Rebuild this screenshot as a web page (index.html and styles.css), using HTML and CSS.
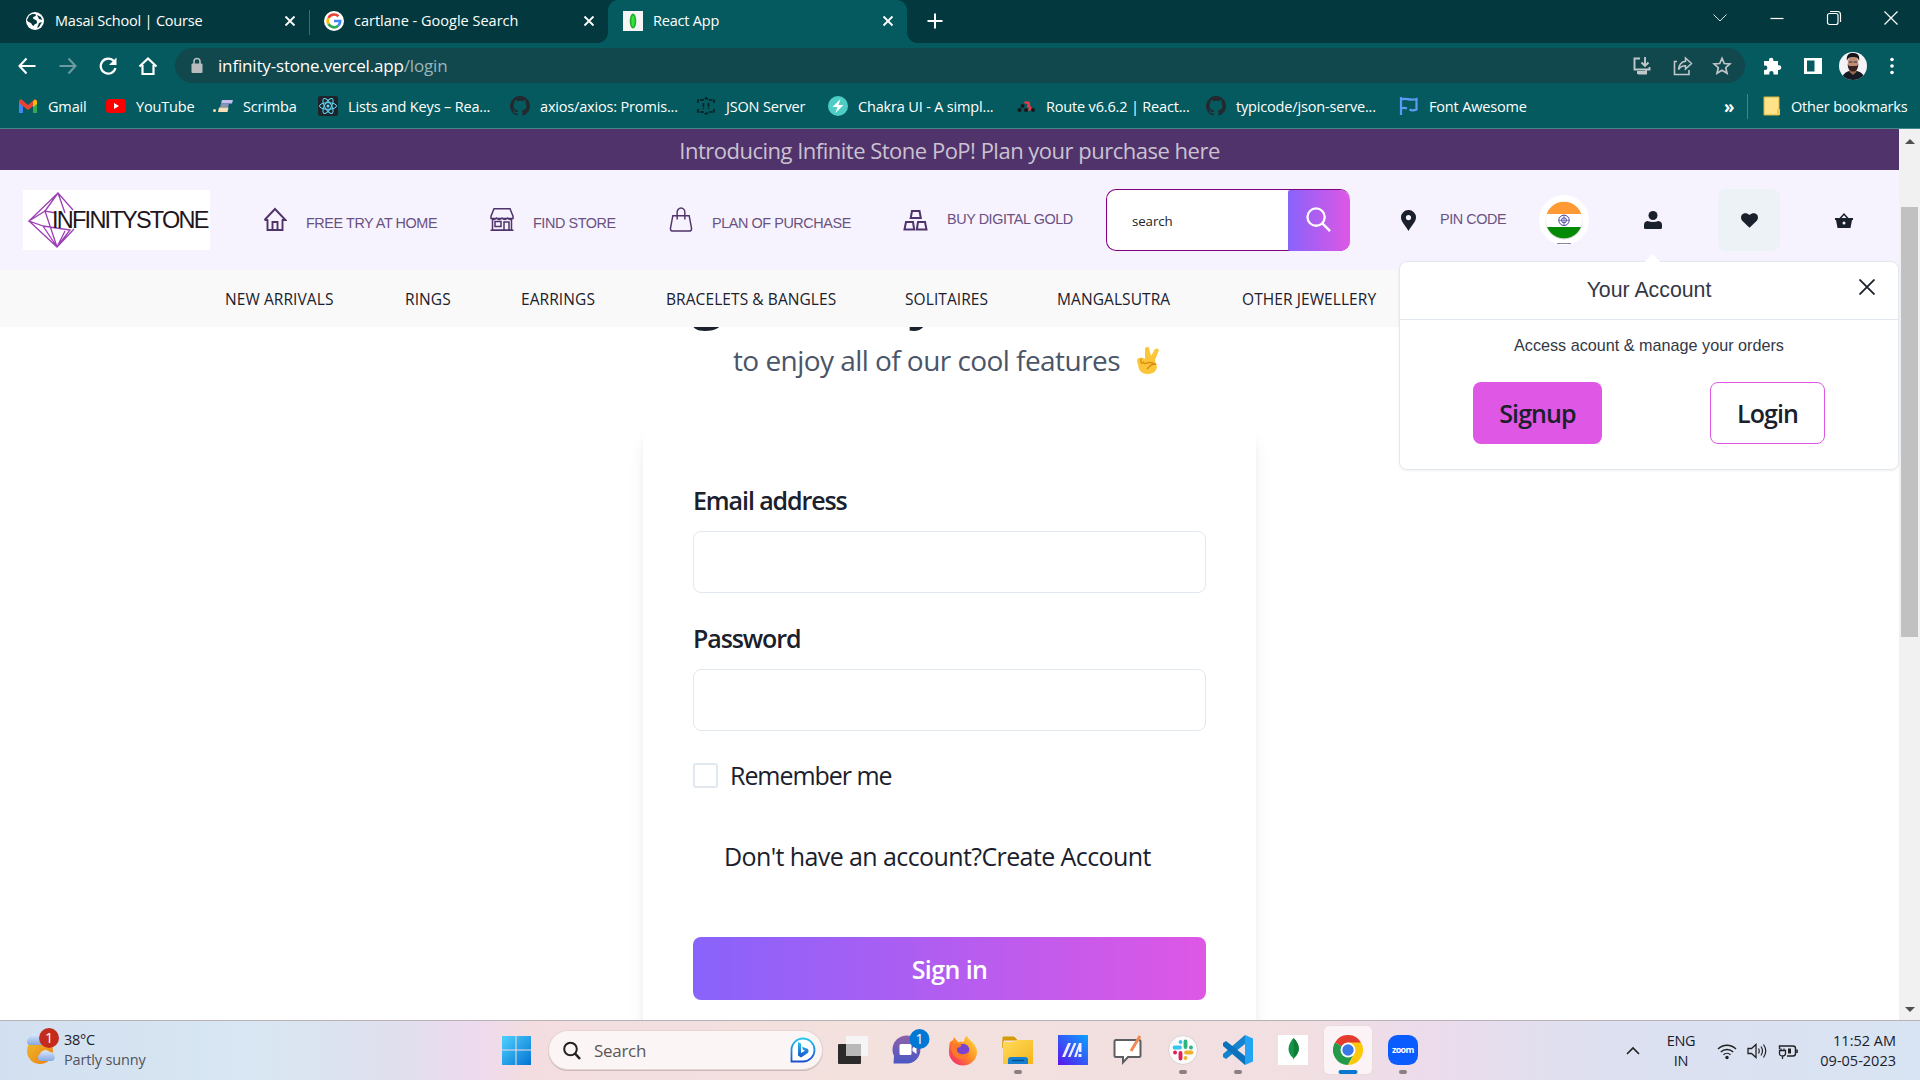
FILE: index.html
```html
<!DOCTYPE html>
<html lang="en">
<head>
<meta charset="utf-8">
<title>React App</title>
<link rel="stylesheet" href="styles.css">
</head>
<body>
<div class="desktop">
  <header class="browser">
    <div class="tabstrip">
      <div class="tab">
        <svg class="i20" viewBox="0 0 20 20"><circle cx="10" cy="10" r="9" fill="#fff"/><path d="M4 5c3-3 7-2 7-1 0 2-3 1-3 3s4 1 4 4-3 1-3 4l-2-1c0-3-4-2-5-5zM12 4l4 2 1 3-3-1zM14 12l3-1-3 5-2 1z" fill="#03393e"/></svg>
        <span class="tab-title">Masai School | Course</span>
        <svg class="i12" viewBox="0 0 12 12"><path d="M1.5 1.5l9 9m0-9l-9 9" stroke="#fff" stroke-width="1.8"/></svg>
      </div>
      <div class="tab tab-sep">
        <svg class="i20" viewBox="0 0 20 20"><circle cx="10" cy="10" r="10" fill="#fff"/><g fill="none" stroke-width="2.7"><path d="M14.5 5.3A6.3 6.3 0 0 0 4.5 7" stroke="#ea4335"/><path d="M4.5 7a6.3 6.3 0 0 0 0 6" stroke="#fbbc05"/><path d="M4.5 13a6.3 6.3 0 0 0 9.700 1.700" stroke="#34a853"/><path d="M14.200 14.700A6 6 0 0 0 16.200 10H10" stroke="#4285f4"/></g></svg>
        <span class="tab-title">cartlane - Google Search</span>
        <svg class="i12" viewBox="0 0 12 12"><path d="M1.500 1.500l9 9m0-9l-9 9" stroke="#fff" stroke-width="1.800"/></svg>
      </div>
      <div class="tab tab-active">
        <svg class="i20" viewBox="0 0 20 20"><path d="M0 0h20v20H0z" fill="#f5f5f5"/><ellipse cx="10" cy="10" rx="3.300" ry="7.500" fill="#1eaf2c"/><ellipse cx="10" cy="10" rx="1.600" ry="5.500" fill="#37e03a"/></svg>
        <span class="tab-title">React App</span>
        <svg class="i12" viewBox="0 0 12 12"><path d="M1.500 1.500l9 9m0-9l-9 9" stroke="#fff" stroke-width="1.800"/></svg>
      </div>
      <svg class="newtab" viewBox="0 0 16 16"><path d="M8 0.500v15M0.500 8h15" stroke="#fff" stroke-width="2"/></svg>
      <div class="winctl">
        <svg viewBox="0 0 16 16"><path d="M1.500 4.500L8 11l6.500-6.500" fill="none" stroke="#dbe4e4"/></svg>
        <svg viewBox="0 0 16 16"><path d="M1.500 8.500h13" stroke="#fff" stroke-width="1.200"/></svg>
        <svg viewBox="0 0 16 16"><rect x="1.500" y="3.500" width="10.500" height="11" rx="2" fill="none" stroke="#fff" stroke-width="1.200"/><path d="M4 1.500h7.500a3 3 0 0 1 3 3V12" fill="none" stroke="#fff" stroke-width="1.200"/></svg>
        <svg viewBox="0 0 16 16"><path d="M1.500 1.500l13 13m0-13l-13 13" stroke="#fff" stroke-width="1.200"/></svg>
      </div>
    </div>
    <div class="toolbar">
      <svg class="i20" viewBox="0 0 20 20"><path d="M18.500 10H3M9.500 2.500L2.500 10l7 7.500" fill="none" stroke="#fff" stroke-width="2.100"/></svg>
      <svg class="i20" viewBox="0 0 20 20"><path d="M1.500 10H17M10.500 2.500l7 7.500-7 7.500" fill="none" stroke="#6c9a9e" stroke-width="2.100"/></svg>
      <svg class="i20" viewBox="0 0 20 20"><path d="M16 5.300A7.500 7.500 0 1 0 17.500 12" fill="none" stroke="#fff" stroke-width="2.200"/><path d="M18.500 1.500V9H11z" fill="#fff"/></svg>
      <svg class="i20" viewBox="0 0 20 20"><path d="M1.500 10.500L10 2.500l8.500 8M4.500 9v9h11V9" fill="none" stroke="#fff" stroke-width="2.200"/></svg>
      <div class="omnibox">
        <svg class="lock" viewBox="0 0 12 16"><rect x="0.500" y="6" width="11" height="9.500" rx="1" fill="#b9bcbe"/><path d="M3 7V4a3 3 0 0 1 6 0v3" fill="none" stroke="#b9bcbe" stroke-width="1.600"/></svg>
        <span class="url">infinity-stone.vercel.app<i>/login</i></span>
        <svg class="i20" viewBox="0 0 20 20"><path d="M8 2.500H2.500v11h15V11M6 17.500h8v-3" fill="none" stroke="#c0c7c9" stroke-width="1.900"/><path d="M5 15h10v3H5z" fill="#c0c7c9"/><path d="M13 1v9M9.500 6.500L13 10l3.500-3.500" fill="none" stroke="#c0c7c9" stroke-width="1.900"/></svg>
        <svg class="i20" viewBox="0 0 20 20"><path d="M4 5.500H1.500v13H16V14" fill="none" stroke="#c0c7c9" stroke-width="1.600"/><path d="M12.500 2l6 5.500-6 5.500V9.800C9 9.800 7 11 5.500 13.500c.5-4.500 3-7.700 7-8.200z" fill="none" stroke="#c0c7c9" stroke-width="1.500"/></svg>
        <svg class="i20" viewBox="0 0 20 20"><path d="M10 2.300l2.300 5.200 5.600.5-4.200 3.700 1.300 5.600-5-3-5 3 1.300-5.600L2.100 8l5.600-.5z" fill="none" stroke="#c0c7c9" stroke-width="1.700"/></svg>
      </div>
      <svg class="i20" viewBox="0 0 20 20"><path d="M2 5h5V4a2.200 2.200 0 0 1 4.400 0v1H16v4.300h1a2.300 2.300 0 0 1 0 4.600h-1V18.500h-4.500V17a2.100 2.100 0 0 0-4.200 0v1.500H2V14h1.200a2.200 2.200 0 0 0 0-4.400H2z" fill="#fff"/></svg>
      <svg class="i20" viewBox="0 0 20 20"><path d="M1 2h18v16H1zM4 4.500v11h7.500v-11z" fill="#fff" fill-rule="evenodd"/></svg>
      <svg class="avatar" viewBox="0 0 28 28"><defs><clipPath id="av"><circle cx="14" cy="14" r="14"/></clipPath></defs><g clip-path="url(#av)"><path d="M0 0h28v28H0z" fill="#f4f4f6"/><path d="M3 28c0-6 4-8 7-9h8c4 1 7 3 8 9z" fill="#161a22"/><path d="M10.500 15h7v5L14 23l-3.500-3z" fill="#9a6652"/><ellipse cx="14" cy="11" rx="5.300" ry="7" fill="#c08d76"/><path d="M8.700 12c0 5 2 7.500 5.300 7.500s5.300-2.500 5.300-7.500c-1 2.500-2 2-5.300 2s-4.300.5-5.300-2z" fill="#33221f"/><path d="M8 9c-1-6 2-8.500 7-8 4 .2 6 3 5 8-1-3-2-4-6-4s-5 1-6 4z" fill="#15151a"/><path d="M10 10h3.500m1 0H18" stroke="#333"/></g></svg>
      <svg class="i20" viewBox="0 0 20 20"><g fill="#fff"><circle cx="10" cy="3.500" r="1.800"/><circle cx="10" cy="10" r="1.800"/><circle cx="10" cy="16.500" r="1.800"/></g></svg>
    </div>
    <nav class="bookmarks">
      <a><svg viewBox="0 0 20 20"><path d="M1 4v13h4V9z" fill="#4285f4"/><path d="M19 4v13h-4V9z" fill="#34a853"/><path d="M1 5l2-2 7 6 7-6 2 2v2l-9 7-9-7z" fill="#ea4335"/><path d="M15 5.300L17 3.500l2 1.500v3l-4 3z" fill="#fbbc04"/></svg>Gmail</a>
      <a><svg viewBox="0 0 20 20"><rect y="3" width="20" height="14" rx="3.500" fill="#f00"/><path d="M8 7l5 3-5 3z" fill="#fff"/></svg>YouTube</a>
      <a><svg viewBox="0 0 20 20"><path d="M9 4h11l-1 3.500H8z" fill="#c6bcf2"/><path d="M8 7.500h8l-1 4H7z" fill="#8b93b5"/><path d="M6 11.500h9.500l-1 4.500H5z" fill="#f6dfb8"/><circle cx="1.500" cy="14.500" r="1.500" fill="#f6dfb8"/></svg>Scrimba</a>
      <a><svg viewBox="0 0 20 20"><rect width="20" height="20" rx="2" fill="#20232a"/><g fill="none" stroke="#61dafb"><ellipse cx="10" cy="10" rx="8.500" ry="3.300"/><ellipse cx="10" cy="10" rx="8.500" ry="3.300" transform="rotate(60 10 10)"/><ellipse cx="10" cy="10" rx="8.500" ry="3.300" transform="rotate(120 10 10)"/></g><circle cx="10" cy="10" r="1.500" fill="#61dafb"/></svg>Lists and Keys – Rea...</a>
      <a><svg viewBox="0 0 16 16"><path d="M8 0a8 8 0 0 0-2.530 15.590c.4.070.550-.170.550-.380l-.010-1.490c-2.010.370-2.530-.490-2.690-.940-.090-.230-.480-.940-.820-1.130-.280-.150-.680-.520-.010-.530.630-.010 1.080.580 1.230.820.720 1.210 1.870.870 2.330.660.070-.520.280-.870.510-1.070-1.780-.200-3.640-.890-3.640-3.950 0-.870.310-1.590.820-2.150-.080-.200-.360-1.020.080-2.120 0 0 .670-.210 2.200.820a7.400 7.400 0 0 1 4 0c1.530-1.040 2.200-.820 2.200-.820.440 1.100.160 1.920.080 2.120.510.560.820 1.270.820 2.150 0 3.070-1.870 3.750-3.650 3.950.290.250.540.730.540 1.480l-.010 2.200c0 .210.150.460.550.380A8 8 0 0 0 8 0z" fill="#24292f"/></svg>axios/axios: Promis...</a>
      <a><svg viewBox="0 0 20 20"><path d="M2 7V4h5l3-2 3 2h5v3M2 13v3h5l3 2 3-2h5v-3M7.500 7v6M12.500 7v6" fill="none" stroke="#071f22" stroke-width="1.600" stroke-dasharray="4 1"/></svg>JSON Server</a>
      <a><svg viewBox="0 0 20 20"><circle cx="10" cy="10" r="10" fill="#4ecdc4"/><path d="M12.500 3L4.500 11h5l-2 6 8-8h-5z" fill="#fff"/></svg>Chakra UI - A simpl...</a>
      <a><svg viewBox="0 0 20 20"><g fill="#171717"><circle cx="3.500" cy="14" r="2"/><circle cx="6.500" cy="10" r="2"/><circle cx="10" cy="14" r="2"/><circle cx="17" cy="14" r="2"/></g><path d="M9.500 6.500h1.500a1.800 1.800 0 0 1 0 3.600h1a2 2 0 0 1 1.500 3.500" fill="none" stroke="#e63946" stroke-width="2.600" stroke-linecap="round"/></svg>Route v6.6.2 | React...</a>
      <a><svg viewBox="0 0 16 16"><path d="M8 0a8 8 0 0 0-2.530 15.590c.4.070.550-.170.550-.380l-.010-1.490c-2.010.370-2.530-.490-2.690-.940-.090-.230-.480-.940-.820-1.130-.280-.150-.680-.520-.010-.530.630-.010 1.080.580 1.230.820.720 1.210 1.870.870 2.330.660.070-.520.280-.870.510-1.070-1.780-.200-3.640-.890-3.640-3.950 0-.870.310-1.590.820-2.150-.080-.200-.360-1.020.080-2.120 0 0 .670-.210 2.200.820a7.400 7.400 0 0 1 4 0c1.530-1.040 2.200-.820 2.200-.820.440 1.100.160 1.920.080 2.120.510.560.820 1.270.820 2.150 0 3.070-1.870 3.750-3.650 3.950.290.250.540.730.540 1.480l-.010 2.200c0 .210.150.460.550.380A8 8 0 0 0 8 0z" fill="#24292f"/></svg>typicode/json-serve...</a>
      <a><svg viewBox="0 0 20 20"><path d="M2 1v18M2 3.500c5-2.500 8 2 15.500-.500v10.500c-2.500 1-5 1-7 0M2 12.500c2-.800 4-.800 6 0" fill="none" stroke="#5b9bf5" stroke-width="2.200"/></svg>Font Awesome</a>
      <b>»</b>
      <a class="other"><svg viewBox="0 0 20 20"><path d="M2 1h15v18H2z" fill="#ffe28a" stroke="#d8b43c"/><path d="M15 13h3v6h-3z" fill="#f0c84b"/></svg>Other bookmarks</a>
    </nav>
  </header>

  <div class="viewport">
    <main class="site">
      <div class="promo">Introducing Infinite Stone PoP! Plan your purchase here</div>
      <div class="header">
        <div class="logo">
          <svg viewBox="0 0 187 60"><g fill="none" stroke="#9b3fb5" stroke-width="1.300"><path d="M50 20L35 3 6 31l28 26 17-18M35 3L22 21 6 31l14 5 14 21-12-36 11 2M35 3l7 20M20 36l27 4-13 17 8-16M35 3L22 21"/></g></svg>
          <span>INFINITYSTONE</span>
        </div>
        <a class="hl"><svg viewBox="0 0 24 24"><path d="M4.500 12v10.500h15V12M9.500 22.500v-8h5v8M1.500 12.500L12 1.500l10.500 11H19M1.500 12.500H5" fill="none" stroke="#50336a" stroke-width="1.900"/></svg><span>FREE TRY AT HOME</span></a>
        <a class="hl"><svg viewBox="0 0 24 24"><path d="M4 1.200h16l3 7.500v2.300H1V8.700zM2.500 11v11.500h19V11M0.500 22.700h23M1 10.500q2.700 3 5.500 0 2.700 3 5.500 0 2.700 3 5.500 0 2.700 3 5.500 0M5 14h6v5H5zM14 22v-7.500h5V22" fill="none" stroke="#50336a" stroke-width="1.500"/></svg><span>FIND STORE</span></a>
        <a class="hl hl-plan"><svg viewBox="0 0 24 26"><path d="M3.500 9h17l2.500 13.500q0 2.500-2.500 2.500h-17Q1 25 1 22.500zM8 13V5.500a4 4.500 0 0 1 8 0V13" fill="none" stroke="#50336a" stroke-width="1.500"/></svg><span>PLAN OF PURCHASE</span></a>
        <a class="hl hl-gold"><svg viewBox="0 0 25 22"><path d="M9 2h7.500l1.300 7H7.700zM3 13h7l1.200 7.500H1.500zM15 13h7l1.500 7.500h-9.700z" fill="none" stroke="#50336a" stroke-width="2"/></svg><span>BUY DIGITAL GOLD</span></a>
        <div class="search"><span>search</span><div class="search-btn"><svg viewBox="0 0 26 26"><circle cx="10.500" cy="10.500" r="9" fill="none" stroke="#fff" stroke-width="2.400"/><path d="M17 17l8 8" stroke="#fff" stroke-width="2.600"/></svg></div></div>
        <svg class="pin" viewBox="0 0 15 21"><path d="M7.500 0A7.400 7.400 0 0 0 0 7.500C0 12 5 16 7.500 21 10 16 15 12 15 7.500A7.400 7.400 0 0 0 7.500 0zm0 5a2.600 2.600 0 1 1 0 5.200 2.600 2.600 0 0 1 0-5.200z" fill="#1a202c"/></svg>
        <span class="pincode">PIN CODE</span>
        <svg class="flag" viewBox="0 0 50 50"><defs><clipPath id="fl"><circle cx="25" cy="25" r="18.300"/></clipPath></defs><circle cx="25" cy="25" r="25" fill="#fff"/><circle cx="25" cy="26" r="18.500" fill="#d3d3d3"/><g clip-path="url(#fl)"><path d="M0 0h50v19H0z" fill="#ff9933"/><path d="M0 19h50v13H0z" fill="#fff"/><path d="M0 32h50v18H0z" fill="#048a04"/></g><g fill="none" stroke="#4747a3"><circle cx="25" cy="25.300" r="5.200"/><circle cx="25" cy="25.300" r="2.500"/><path d="M19.500 25.300h11M25 20v10.500" stroke-width=".7"/></g><path d="M18 48.500h14" stroke="#6c6699" stroke-width=".8"/></svg>
        <svg class="user" viewBox="0 0 18 18"><circle cx="9" cy="4.500" r="4.500" fill="#1a202c"/><path d="M0 17.500v-3.500q0-3.500 3.500-4 5.500 2 11 0 3.500.5 3.500 4v2.500q0 1.500-1.500 1.500h-15z" fill="#1a202c"/></svg>
        <div class="wish"><svg viewBox="0 0 17 15"><path d="M8.500 14.800L1.500 8C-.5 6-.3 3 1.200 1.500 3-.3 6-.5 8.500 2 11-.5 14-.3 15.800 1.500 17.300 3 17.500 6 15.500 8z" fill="#1a202c"/></svg></div>
        <svg class="basket" viewBox="0 0 18 15"><path d="M0 5h4.500L9 0l4.500 5H18v2h-1l-1.500 8h-13L1 7H0zm6.500 0h5L9 2.300zM9 8.500A1.500 1.500 0 1 0 9 11.500 1.500 1.500 0 0 0 9 8.500z" fill="#1a202c" fill-rule="evenodd"/></svg>
      </div>
      <div class="menu"><a>NEW ARRIVALS</a><a>RINGS</a><a>EARRINGS</a><a>BRACELETS &amp; BANGLES</a><a>SOLITAIRES</a><a>MANGALSUTRA</a><a>OTHER JEWELLERY</a></div>
      <div class="content">
        <h1>Sign in to your account</h1>
        <p class="sub"><span>to enjoy all of our cool features</span>
          <svg viewBox="0 0 22 28"><path d="M8 13V2.500Q10-.5 12 2l2 8 4-7q2.500-1.500 4 1l-4 10 2 7q-1 7-9 7-7 0-9-5L0 15q0-3 2.500-3Q6 11 8 13z" fill="#fcc638"/><path d="M7 18q6-3 11 0-4 0-8 5M4 12.500v4q2 2 3-1" fill="none" stroke="#d98a12" stroke-width="1.300"/></svg>
        </p>
        <form class="card">
          <label>Email address</label>
          <div class="field"></div>
          <label>Password</label>
          <div class="field"></div>
          <div class="remember"><i></i><span>Remember me</span></div>
          <p class="create">Don't have an account?Create Account</p>
          <div class="signin">Sign in</div>
        </form>
      </div>
      <div class="popover">
        <div class="pop-head"><span>Your Account</span><svg viewBox="0 0 16 16"><path d="M.5 .5l15 15m0-15l-15 15" stroke="#1a202c" stroke-width="1.800"/></svg></div>
        <p>Access acount &amp; manage your orders</p>
        <div class="pop-actions"><div class="btn-signup">Signup</div><div class="btn-login">Login</div></div>
      </div>
    </main>
    <div class="scrollbar"><svg viewBox="0 0 10 6"><path d="M0 6l5-5 5 5z" fill="#505050"/></svg><div class="thumb"></div><svg viewBox="0 0 10 6"><path d="M0 0l5 5 5-5z" fill="#505050"/></svg></div>
  </div>

  <footer class="taskbar">
    <div class="weather">
      <svg viewBox="0 0 32 34"><defs><linearGradient id="sun" x2="1" y2="1"><stop stop-color="#ecc02f"/><stop offset="1" stop-color="#f07a10"/></linearGradient><linearGradient id="cl" x2="0" y2="1"><stop stop-color="#dce9fb"/><stop offset="1" stop-color="#86a8e2"/></linearGradient></defs><circle cx="15" cy="20" r="13" fill="url(#sun)"/><path d="M4 14a4 4 0 0 1 0-7 5 5 0 0 1 9-2 5 5 0 0 1 3 9z" fill="url(#cl)"/><path d="M15 30a4 4 0 0 1 0-7 6 6 0 0 1 10-2 4.700 4.700 0 0 1 2 9z" fill="url(#cl)"/></svg>
      <b>1</b>
      <div><span>38°C</span><em>Partly sunny</em></div>
    </div>
    <div class="apps">
      <svg viewBox="0 0 30 30"><defs><linearGradient id="win" x2="1" y2="1"><stop stop-color="#4fd2fd"/><stop offset="1" stop-color="#0273d4"/></linearGradient></defs><path d="M1 1h13.500v13.500H1zM15.500 1H30v13.500H15.500zM1 15.500h13.500V30H1zM15.500 15.500H30V30H15.500z" fill="url(#win)"/></svg>
      <div class="tsearch"><svg viewBox="0 0 18 18"><circle cx="7.500" cy="7.500" r="6.300" fill="none" stroke="#222" stroke-width="2"/><path d="M12 12l5 5.500" stroke="#222" stroke-width="2.600"/></svg><span>Search</span><svg class="bing" viewBox="0 0 26 26"><defs><linearGradient id="bg" x2="0" y2="1"><stop stop-color="#28c4f0"/><stop offset="1" stop-color="#1a4fd0"/></linearGradient></defs><path d="M1.500 24.500V13A11.500 11.500 0 1 1 13 24.500z" fill="#fff" stroke="url(#bg)" stroke-width="1.800"/><path d="M8 5l3 1.500V16l4-2.200-2-1-1-3 6 2.200q1.500 3-1 4.500L11 20.500 8 18.500z" fill="url(#bg)"/></svg></div>
      <svg viewBox="0 0 30 30"><rect y="9" width="23" height="20" rx="1" fill="#2b2b2b"/><rect x="8" y="1" width="22" height="20" rx="1" fill="#f5f5f5" opacity=".95"/><path d="M8 9h15v12H8z" fill="#b9b9b9"/></svg>
      <svg viewBox="0 0 30 30"><defs><linearGradient id="chat" x2="0" y2="1"><stop stop-color="#8d62a8"/><stop offset="1" stop-color="#4b57c6"/></linearGradient></defs><path d="M.5 28.500L1 21A14 14 0 1 1 15 28.500z" fill="url(#chat)"/><rect x="6.500" y="9" width="12" height="11" rx="1.500" fill="#fff"/><path d="M19.500 13l4-3v9l-4-3z" fill="#fff"/><circle cx="26.500" cy="4" r="10" fill="#0078d4"/><text x="22.500" y="9" fill="#fff" font-size="14">1</text></svg>
      <svg viewBox="0 0 30 30"><defs><linearGradient id="ff" x1="1" x2="0" y2="1"><stop stop-color="#ffe83b"/><stop offset=".5" stop-color="#ff8a25"/><stop offset="1" stop-color="#f3117e"/></linearGradient></defs><path d="M2 7l3-2 1-3 4 5q3-1 6 0c0-3 2-6 3-6 1 3 4 4 5 6 3 3 5 6 5 10a14 13.500 0 0 1-28 0Q1 10 2 7z" fill="url(#ff)"/><circle cx="15" cy="15" r="6.300" fill="#7942d0"/><path d="M3 10q5-3 11 0-2 3-5 3-1 5 4 6 5 1 8-3-1 8-9 8-9-2-9-14z" fill="#fb7a2a"/></svg>
      <svg class="run" viewBox="0 0 30 40"><defs><linearGradient id="fo" x2="1" y2="1"><stop stop-color="#ffdb5c"/><stop offset="1" stop-color="#f5b51b"/></linearGradient></defs><path d="M0 2h11l3 3H0v8z" fill="#d59a05" stroke="#d59a05"/><path d="M0 7h10l3-2h17v24H0z" fill="url(#fo)"/><path d="M5 29v-4q0-3 3-3h14q3 0 3 3v4z" fill="#1580cf"/><path d="M9 25.500h12" stroke="#08508f" stroke-width="1.500"/><rect x="11" y="35" width="8" height="4" rx="2" fill="#8a8082"/></svg>
      <svg viewBox="0 0 30 30"><defs><linearGradient id="my" x1="1" x2="0" y2="1"><stop stop-color="#0aa2ff"/><stop offset="1" stop-color="#5a14ef"/></linearGradient></defs><path d="M0 0h30v30H0z" fill="url(#my)"/><path d="M4 22L10 8h3L7 22zM10 22l6-14h2.500l-6 14zM16 22l5-14h2.500v9h-2.500v-3l-2.500 8zM20.500 19h3v3h-3z" fill="#f1eeff"/></svg>
      <svg viewBox="0 0 30 30"><path d="M3 5h23q1.500 0 1.500 1.500v14Q27.500 22 26 22H15l-5 5.500V22H3q-1.500 0-1.500-1.500v-14Q1.500 5 3 5z" fill="#fff" stroke="#5c5e62" stroke-width="2"/><path d="M27 1l-9 15" stroke="#ef8a55" stroke-width="3"/></svg>
      <svg class="run" viewBox="0 0 30 40"><circle cx="15" cy="15" r="14.500" fill="#fbfbfb" stroke="#d8d2d2"/><g stroke-width="3.800" stroke-linecap="round"><path d="M6.500 12.500H12M12.500 7v.1" stroke="#36c5f0"/><path d="M17.500 6.500V12M23 12.500h-.1" stroke="#2eb67d"/><path d="M18 17.500h5.500M17.500 23v-.1" stroke="#ecb22e"/><path d="M12.500 18v5.500M7 17.500h.1" stroke="#e01e5a"/></g><rect x="11" y="35" width="8" height="4" rx="2" fill="#8a8082"/></svg>
      <svg class="run" viewBox="0 0 30 40"><path d="M22 0v30L30 26.500v-23z" fill="#22a3f3"/><path d="M22 0L0 19v3l3 2L22 9z" fill="#1583cd"/><path d="M22 30L0 11V8l3-2 19 15z" fill="#0b72bd"/><rect x="11" y="35" width="8" height="4" rx="2" fill="#8a8082"/></svg>
      <svg viewBox="0 0 30 30"><path d="M0 0h30v30H0z" fill="#fff"/><path d="M15.500 3c7 7 7 14 .5 20l-.5 2-.5-2c-6.500-6-5.500-13 .5-20z" fill="#159447"/><path d="M15.500 3c7 7 7 14 .5 20z" fill="#0f7d38"/></svg>
      <div class="tile"><svg class="run" viewBox="0 0 30 40"><path d="M15 15L2 7.500a15 15 0 0 1 26 0z" fill="#e33b2e"/><path d="M15 15L2 7.500A15 15 0 0 0 15 30l6-11z" fill="#249a48"/><path d="M15 15l6 4-6 11A15 15 0 0 0 28 7.500H15z" fill="#fdc70c"/><circle cx="15" cy="15" r="7.500" fill="#fff"/><circle cx="15" cy="15" r="5.700" fill="#3b78e7"/><rect x="5.500" y="35" width="19" height="4" rx="2" fill="#0a78d0"/></svg></div>
      <svg class="run" viewBox="0 0 30 40"><rect width="30" height="30" rx="9.500" fill="#0b5cff"/><text x="4" y="17.500" fill="#fff" font-size="9" font-weight="bold" textLength="22">zoom</text><rect x="11" y="35" width="8" height="4" rx="2" fill="#8a8082"/></svg>
    </div>
    <div class="tray">
      <svg viewBox="0 0 20 20"><path d="M4 13l6-6 6 6" fill="none" stroke="#222" stroke-width="1.600"/></svg>
      <div class="lang">ENG<br>IN</div>
      <svg viewBox="0 0 20 20"><g fill="none" stroke="#222" stroke-width="1.400"><path d="M1 8a12.700 12.700 0 0 1 18 0M3.800 11a8.800 8.800 0 0 1 12.400 0M6.500 13.800a5 5 0 0 1 7 0"/></g><circle cx="10" cy="16.500" r="1.700" fill="#222"/></svg>
      <svg viewBox="0 0 20 20"><path d="M1 7.500h3.500L9 3.500v13l-4.500-4H1z" fill="none" stroke="#222" stroke-width="1.300"/><path d="M11.500 7.500q1.500 2.500 0 5M14 5.500q3 4.500 0 9M16.500 3.500q4.500 6.500 0 13" fill="none" stroke="#222" stroke-width="1.200"/></svg>
      <svg viewBox="0 0 20 20"><path d="M3.500 5H15q2.500 0 2.500 2.500v5q0 2.500-2.500 2.500H9M1.500 8V5h2" fill="none" stroke="#222" stroke-width="1.400"/><path d="M19 8.500v3.500" stroke="#222" stroke-width="1.600"/><path d="M10 7.500h3v5h-3z" fill="#222"/><path d="M1.500 9.500h6v3q0 2.500-3 2.500t-3-2.500zM4.500 15v3M3 9.500v-2m3 2v-2" fill="none" stroke="#222" stroke-width="1.300"/></svg>
      <div class="clock">11:52 AM<br>09-05-2023</div>
    </div>
  </footer>
</div>
</body>
</html>
```
FILE: styles.css
```css
* { box-sizing: border-box; }
body, h1, p { margin: 0; }
body { width: 1920px; height: 1080px; overflow: hidden; font-family: "Open Sans", "Noto Sans", sans-serif; color: #1a202c; }
svg { display: block; flex: none; }
i, em { font-style: normal; }
span, a, b { white-space: nowrap; }
.i20 { width: 20px; height: 20px; }
.i12 { width: 12px; height: 12px; }

.desktop { display: flex; flex-direction: column; height: 1080px; }

/* Browser window frame */
.browser { height: 129px; background: #055a60; border-bottom: 1px solid #45868a; color: #fff; }
.tabstrip { display: flex; height: 43px; background: #03393e; }
.tab { display: flex; align-items: center; width: 299px; height: 43px; padding: 0 13px 2px 15px; gap: 10px; font-size: 14.5px; }
.tab:first-child { width: 309px; padding-left: 25px; }
.tab-sep { background: linear-gradient(#46686b, #46686b) 0 10px / 1px 25px no-repeat; }
.tab-title { flex: 1; letter-spacing: -0.2px; }
.tab-sep .tab-title { letter-spacing: 0; }
.tab-active { position: relative; background: #055a60; border-radius: 10px 10px 0 0; }
.tab-active::before, .tab-active::after { content: ""; position: absolute; bottom: 0; width: 10px; height: 10px; }
.tab-active::before { left: -10px; background: radial-gradient(circle at 0 0, transparent 9.5px, #055a60 10px); }
.tab-active::after { right: -10px; background: radial-gradient(circle at 100% 0, transparent 9.5px, #055a60 10px); }
.newtab { width: 16px; height: 16px; margin: 13px 0 0 20px; }
.winctl { display: flex; gap: 41px; margin: 10px 21px 0 auto; }
.winctl svg { width: 16px; height: 16px; }
.toolbar { display: grid; grid-template-columns: 41px 40px 39.5px 37.5px 1587px 41px 36px 43px 20px; align-items: center; height: 45px; padding-left: 17px; }
.omnibox { display: grid; grid-template-columns: 27px 1414px 41px 39px 20px; align-items: center; width: 1570px; height: 35px; padding-left: 16px; background: #11484e; border-radius: 18px; }
.lock { width: 12px; height: 17px; }
.url { font-size: 17px; letter-spacing: -0.17px; }
.url i { color: #9db5b8; }
.avatar { width: 28px; height: 28px; }
.bookmarks { display: grid; grid-template-columns: 88px 107px 105px 192px 186px 132px 188px 190px 193px 325px 23px auto; align-items: center; height: 36px; padding-left: 18px; font-size: 14.5px; letter-spacing: -0.17px; }
.bookmarks a { display: flex; align-items: center; gap: 10px; }
.bookmarks a svg { width: 20px; height: 20px; }
.bookmarks b { font-size: 17px; }
.bookmarks .other { gap: 9px; padding-left: 15px; background: linear-gradient(#45868a, #45868a) 0 0 / 1px 25px no-repeat; height: 25px; }

/* Page */
.viewport { display: flex; height: 891px; background: #fff; }
.site { position: relative; width: 1899px; overflow: hidden; }
.promo { height: 41px; line-height: 42px; text-align: center; font-size: 22px; letter-spacing: -0.5px; color: #cbc2d2; background: #50336a; }
.header { display: grid; grid-template-columns: 240px 227px 179px 234px 203px 294px 40px 99px 105px 74px 117px 18px; align-items: center; height: 100px; padding-left: 23px; background: #f6f3ff; font-family: "Liberation Sans", Arial, sans-serif; color: #6a5180; letter-spacing: -0.42px; }
.logo { display: grid; width: 187px; height: 60px; background: #fff; }
.logo > * { grid-area: 1 / 1; }
.logo svg { width: 187px; height: 60px; }
.logo span { margin-left: 29px; font-size: 23.5px; line-height: 60px; letter-spacing: -1.75px; color: #23151c; }
.hl { display: grid; grid-template-columns: 43px auto; align-items: center; font-size: 14.4px; }
.hl svg { width: 24px; height: 25px; margin-top: -1px; }
.hl span { padding-top: 6px; }
.hl-gold { grid-template-columns: 44px auto; }
.hl-gold svg { width: 25px; height: 22px; margin: 0; }
.hl-gold span { padding: 0 0 2px; }
.search { display: flex; align-items: center; justify-content: space-between; width: 244px; height: 62px; padding-left: 25px; border: 1px solid #800080; border-right: 0; border-radius: 10px; background: #fff; font: 13.3px "Open Sans", sans-serif; color: #222; letter-spacing: -0.1px; }
.search span { padding-top: 2px; }
.search-btn { display: grid; place-items: center; width: 62px; height: 61px; padding: 0 2px 2px 0; border-radius: 2px 10px 10px 2px; background: linear-gradient(90deg, #8863fb, #de57e5); }
.search-btn svg { width: 25px; height: 25px; }
.pin { width: 15px; height: 21px; margin-left: 1px; }
.pincode { font-size: 14.4px; padding-bottom: 2px; }
.flag { width: 50px; height: 50px; }
.user { width: 18px; height: 18px; }
.wish { display: grid; place-items: center; width: 62px; height: 62px; border-radius: 8px; background: #edf2f7; }
.wish svg { width: 17px; height: 15px; }
.basket { width: 18px; height: 15px; }
.menu { position: relative; z-index: 1; display: grid; grid-template-columns: 180px 116px 145px 239px 152px 185px auto; align-items: center; height: 57px; padding: 1px 0 0 225px; background: #f9f9f9; font-size: 15.5px; letter-spacing: 0.08px; }
.content { display: flex; flex-direction: column; align-items: center; height: 693px; }
h1 { display: flex; align-items: flex-end; height: 16px; margin: -19px 0 0 10px; font-size: 56px; line-height: 1; letter-spacing: -1px; white-space: nowrap; }
.sub { display: flex; align-items: center; gap: 17px; height: 42px; margin: 17px 0 0 -7px; font-size: 28px; letter-spacing: -0.55px; color: #4a5568; }
.sub svg { width: 22px; height: 28px; }
.card { width: 613px; height: 700px; flex: none; margin-top: 48px; padding: 53px 50px; border-radius: 10px; background: #fff; box-shadow: 0 12px 19px -4px rgba(0, 0, 0, .1), 0 5px 8px -2px rgba(0, 0, 0, .04); font-size: 25px; letter-spacing: -0.6px; }
.card label { display: block; height: 51px; line-height: 41px; font-weight: 600; letter-spacing: -1.1px; }
.field { height: 62px; margin-bottom: 25px; border: 1px solid #e2e8f0; border-radius: 8px; }
.remember { display: flex; align-items: center; gap: 12px; height: 38px; letter-spacing: -1.05px; }
.remember i { width: 25px; height: 25px; border: 2px solid #e2e8f0; border-radius: 3px; }
.create { margin: 43px 0 0 31px; line-height: 38px; }
.signin { display: grid; place-items: center; height: 63px; margin-top: 62px; border-radius: 8px; background: linear-gradient(90deg, #8863fb, #de57e5); color: #fff; font-weight: 600; }

.popover { position: absolute; z-index: 2; left: 1399px; top: 132px; width: 500px; height: 209px; border: 1px solid #e2e8f0; border-radius: 8px; background: #fff; box-shadow: 0 1px 3px rgba(0, 0, 0, .06); font-family: "Liberation Sans", Arial, sans-serif; color: #323845; text-align: center; }
.popover::before { content: ""; position: absolute; left: 247px; top: -6px; width: 11px; height: 11px; background: #fff; transform: rotate(45deg); }
.pop-head { display: grid; grid-template-columns: 1fr auto; align-items: center; height: 58px; padding: 0 23px 0 39px; border-bottom: 1px solid #e2e8f0; font-size: 21.3px; }
.pop-head svg { width: 16px; height: 16px; margin-top: -7px; }
.popover p { padding-top: 15px; font-size: 16.2px; line-height: 20px; }
.pop-actions { display: flex; justify-content: space-between; padding: 27px 73px 0; font: 600 25px "Open Sans", sans-serif; letter-spacing: -0.9px; color: #1a202c; }
.pop-actions div { display: grid; place-items: center; height: 62px; border-radius: 8px; }
.btn-signup { width: 129px; background: #de57e5; }
.btn-login { width: 115px; border: 1px solid #de57e5; }

.scrollbar { display: flex; flex-direction: column; align-items: center; width: 21px; padding: 9px 0 7px; background: #f1f1f1; }
.scrollbar svg { width: 10px; height: 6px; }
.thumb { width: 17px; height: 430px; margin: 63px 0 auto; background: #c1c1c1; }

/* Taskbar */
.taskbar { display: grid; grid-template-columns: 501px 1122px auto; height: 60px; border-top: 1px solid #b9b0b8; background: linear-gradient(90deg, #d2dff0, #d8e7f3 250px, #dfe0ee 390px, #eedaee 475px, #f3dde0 530px, #f3e1de 850px, #f1dfe2 1300px, #ecdcec 1430px, #dde0f0 1600px, #d8e4f3 1920px); font-size: 14.5px; letter-spacing: -0.3px; }
.weather { position: relative; display: flex; gap: 7px; padding: 10px 0 0 25px; line-height: 20px; }
.weather svg { width: 32px; height: 34px; }
.weather div { display: grid; height: 40px; margin-top: -1px; }
.weather em { color: #50535c; letter-spacing: -0.15px; }
.weather b { position: absolute; left: 39px; top: 7px; width: 20px; height: 20px; border-radius: 50%; background: #c42b1c; color: #fff; text-align: center; font-weight: 400; }
.apps { display: grid; grid-template-columns: 48px 289px repeat(8, 55px) 46px 64px 30px; padding-top: 14px; }
.apps > svg { width: 30px; height: 30px; overflow: visible; }
.apps .run { width: 30px; height: 40px; }
.apps .tile { width: 48px; height: 48px; margin-top: -9px; padding: 9px; border-radius: 5px; background: #fbf3f5; box-shadow: 0 0 0 1px #e9dcde; }
.tsearch { display: grid; grid-template-columns: 31px 196px 26px; align-items: center; width: 273px; height: 38px; margin-top: -4px; padding-left: 14px; border-radius: 19px; background: #fbf6f5; box-shadow: 0 0 0 1px #e6d3d2, 0 1px 0 1px #c9b9b9; font-size: 17px; color: #5c5656; }
.tsearch svg { width: 18px; height: 19px; }
.tsearch .bing { width: 26px; height: 26px; }
.tray { display: grid; grid-template-columns: 38px 56px 30px 31px 20px 98px; align-items: center; line-height: 20px; }
.tray svg { width: 20px; height: 20px; }
.lang { width: 38px; padding-left: 2px; text-align: center; }
.clock { text-align: right; letter-spacing: 0; }
```
